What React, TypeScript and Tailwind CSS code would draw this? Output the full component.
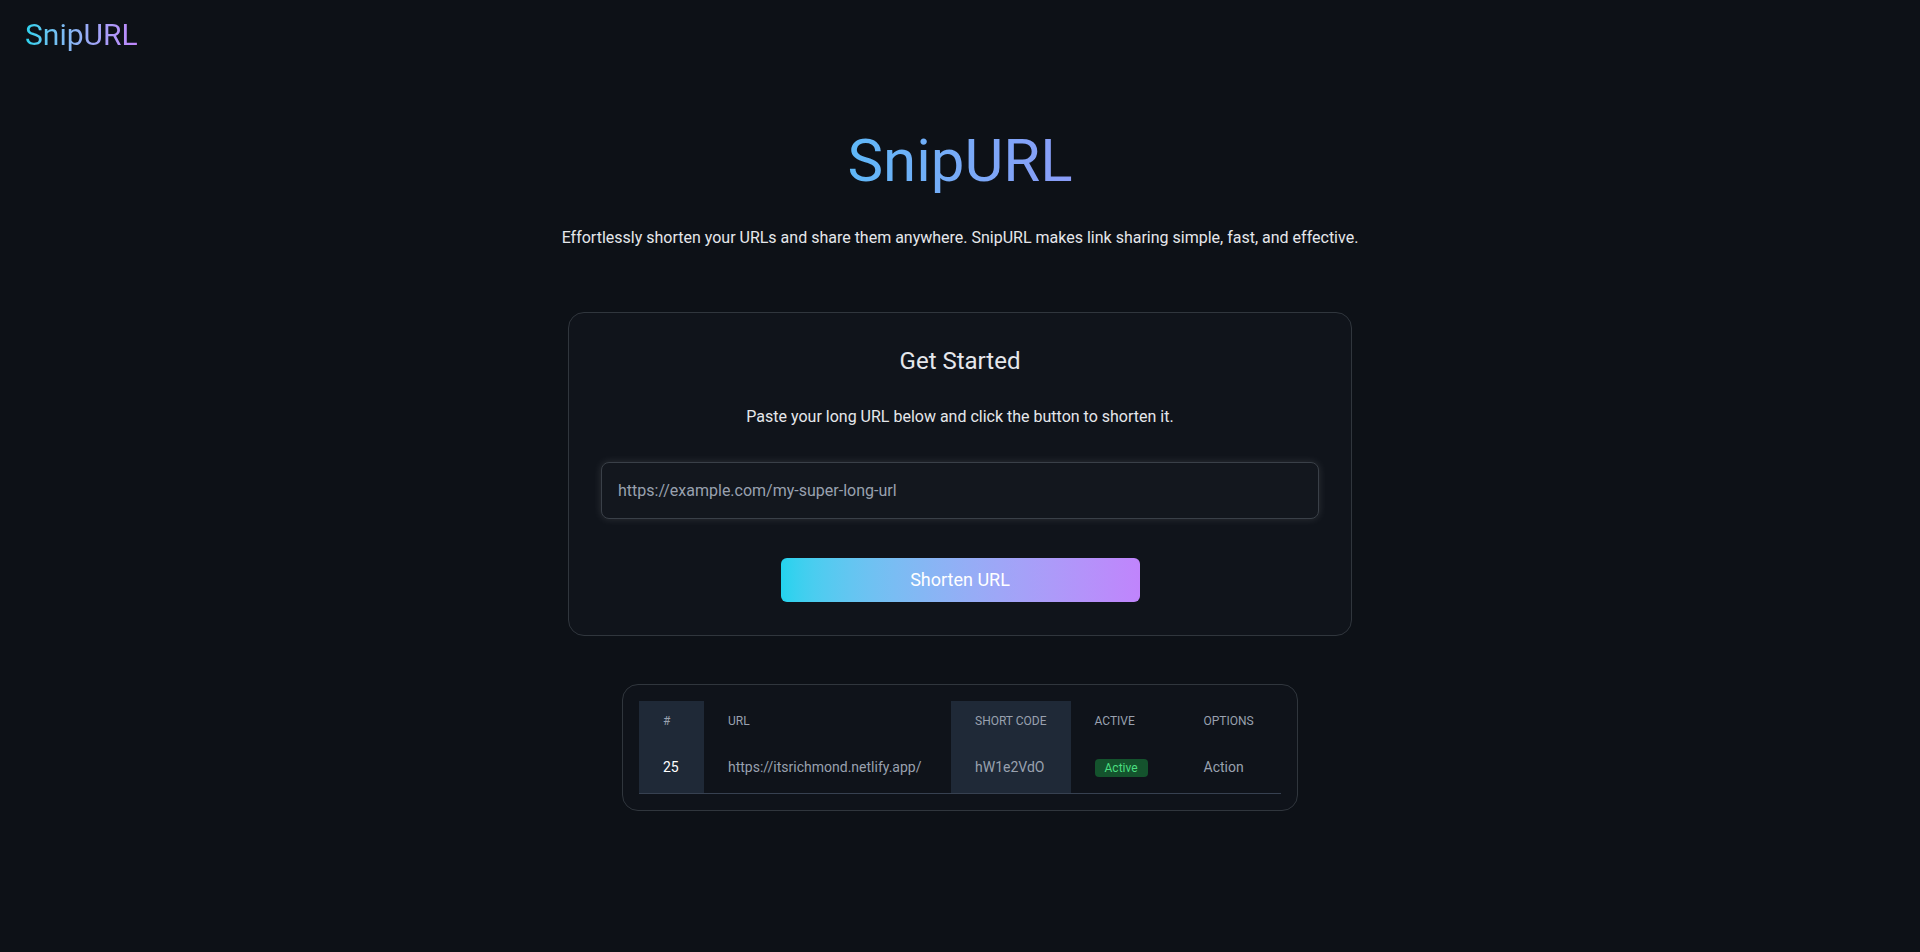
import React from 'react';

export default function App() {
    const links = [
        { id: 25, url: 'https://itsrichmond.netlify.app/', code: 'hW1e2VdO', active: true },
    ];

    return (
        <div
            className="min-h-screen bg-[#0d1117] text-gray-200"
            style={{ fontFamily: 'Roboto, "Noto Sans", sans-serif' }}
        >
            {/* Navbar */}
            <nav className="px-[25px] pt-[14px]">
                <span className="text-[30px] leading-[42px] bg-linear-to-r from-[#22d3ee] to-[#c084fc] bg-clip-text text-transparent">
                    SnipURL
                </span>
            </nav>

            <main className="flex flex-col items-center pt-[69px]">
                {/* Hero */}
                <h1 className="text-6xl leading-[72px] bg-linear-to-r from-[#5eb8f8] to-[#8a9cf8] bg-clip-text text-transparent">
                    SnipURL
                </h1>
                <p className="mt-[29px] text-base text-gray-200">
                    Effortlessly shorten your URLs and share them anywhere. SnipURL makes link sharing simple, fast, and effective.
                </p>

                {/* Get Started card */}
                <div className="mt-[62px] w-[784px] rounded-2xl border border-[#30363d] bg-[#10141b] px-8 pt-[32px] pb-[33px] flex flex-col items-center">
                    <h2 className="text-2xl leading-8 text-gray-200">Get Started</h2>
                    <p className="mt-[28px] text-base text-gray-200">
                        Paste your long URL below and click the button to shorten it.
                    </p>
                    <input
                        type="text"
                        placeholder="https://example.com/my-super-long-url"
                        className="mt-[33px] w-full h-[57px] rounded-lg border border-[#3a4048] bg-[#13171e] px-4 text-base text-gray-200 placeholder:text-gray-400 shadow-[0_0_8px_rgba(255,255,255,0.12)] outline-none"
                    />
                    <button className="mt-[39px] w-[359px] h-[44px] rounded-md bg-linear-to-r from-[#22d3ee] to-[#c084fc] text-lg text-white">
                        Shorten URL
                    </button>
                </div>

                {/* Links table */}
                <div className="mt-[48px] w-[676px] rounded-2xl border border-[#30363d] bg-[#0f131a] p-[16px]">
                    <table className="w-full text-left text-sm whitespace-nowrap">
                        <thead className="text-xs uppercase text-gray-400">
                            <tr>
                                <th className="w-[65px] bg-[#1f2937] px-6 py-3 font-normal">#</th>
                                <th className="w-[247px] px-6 py-3 font-normal">URL</th>
                                <th className="w-[119px] bg-[#1f2937] px-6 py-3 font-normal">Short Code</th>
                                <th className="w-[109px] px-6 py-3 font-normal">Active</th>
                                <th className="px-6 py-3 font-normal">Options</th>
                            </tr>
                        </thead>
                        <tbody>
                            {links.map((link) => (
                                <tr key={link.id} className="border-b border-[#374151]">
                                    <td className="bg-[#1f2937] px-6 py-4 text-white">{link.id}</td>
                                    <td className="px-6 py-4 text-gray-400">{link.url}</td>
                                    <td className="bg-[#1f2937] px-6 py-4 text-gray-400">{link.code}</td>
                                    <td className="px-6 py-4">
                                        <span className="rounded-sm bg-[#14532d] px-2.5 py-0.5 text-xs text-[#4ade80]">
                                            Active
                                        </span>
                                    </td>
                                    <td className="px-6 py-4 text-gray-400">Action</td>
                                </tr>
                            ))}
                        </tbody>
                    </table>
                </div>
            </main>
        </div>
    );
}
